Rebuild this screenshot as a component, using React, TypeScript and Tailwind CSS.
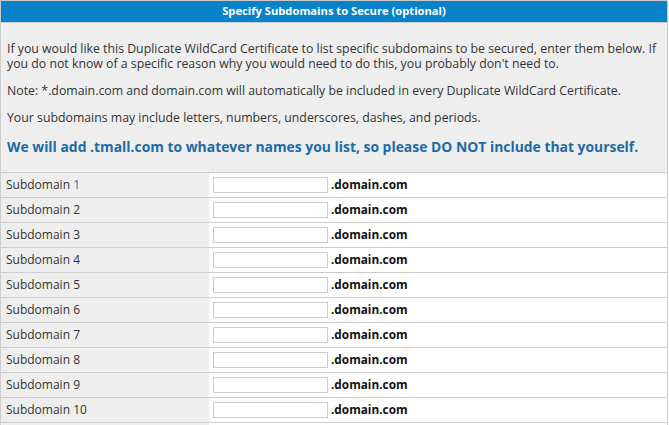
import React from "react";

export default function App() {
  const rows = Array.from({ length: 10 }, (_, i) => i + 1);
  return (
    <div
      className="w-[669px] h-[425px] overflow-hidden bg-white"
      style={{ fontFamily: '"Open Sans", "Noto Sans", sans-serif' }}
    >
      <div className="w-[668px] border border-[#cccccc] bg-[#eeeeee]">
        <div className="h-[22px] bg-[#0883c9] border-b border-[#cccccc] flex items-center justify-center text-white text-[11.2px] font-bold">
          Specify Subdomains to Secure (optional)
        </div>
        <div className="px-[6px] pt-[18px] pb-[16px] text-[#333333] text-[12.3px] leading-[15px]">
          <p>
            If you would like this Duplicate WildCard Certificate to list specific subdomains to be secured, enter them below. If you do not know of a specific reason why you would need to do this, you probably don't need to.
          </p>
          <p className="mt-[12px]">
            Note: *.domain.com and domain.com will automatically be included in every Duplicate WildCard Certificate.
          </p>
          <p className="mt-[12px]">
            Your subdomains may include letters, numbers, underscores, dashes, and periods.
          </p>
          <p className="mt-[13px] text-[13.9px] leading-[18px] font-bold text-[#1c6aa6] whitespace-nowrap">
            We will add .tmall.com to whatever names you list, so please DO NOT include that yourself.
          </p>
        </div>
        {rows.map((n) => (
          <div key={n} className="flex h-[25px] border-t border-[#cccccc]">
            <div className="w-[208px] pl-[5px] flex items-center text-[12px] text-[#333333]">
              Subdomain&nbsp;<span className={n === 1 ? "text-[#3b6e9c]" : ""}>{n}</span>
            </div>
            <div className="flex-1 bg-white flex items-center pl-[4px]">
              <input
                type="text"
                className="w-[115px] h-[16px] border border-[#cccccc] bg-white outline-none"
              />
              <span className="ml-[3px] text-[11.8px] font-bold text-[#111111]">.domain.com</span>
            </div>
          </div>
        ))}
        <div className="flex h-[25px] border-t border-[#cccccc]">
          <div className="w-[208px]" />
          <div className="flex-1 bg-white" />
        </div>
      </div>
    </div>
  );
}
